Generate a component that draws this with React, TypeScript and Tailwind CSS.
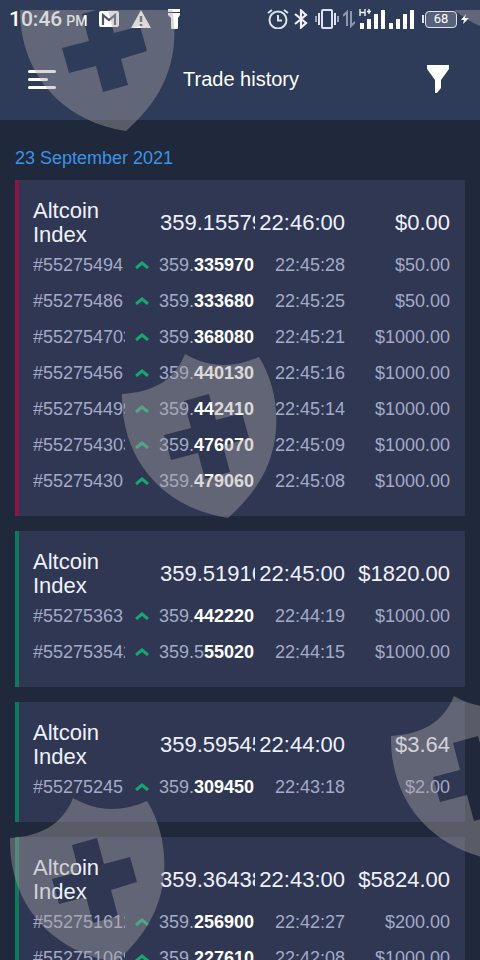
import { useState } from "react";

type Trade = {
  id: string;
  base: string;
  digits: string;
  time: string;
  amount: string;
};

type Group = {
  asset: string;
  price: string;
  time: string;
  total: string;
  won: boolean;
  trades: Trade[];
};

const groups: Group[] = [
  {
    asset: "Altcoin Index",
    price: "359.15579",
    time: "22:46:00",
    total: "$0.00",
    won: false,
    trades: [
      { id: "#55275494", base: "359.", digits: "335970", time: "22:45:28", amount: "$50.00" },
      { id: "#55275486", base: "359.", digits: "333680", time: "22:45:25", amount: "$50.00" },
      { id: "#552754703", base: "359.", digits: "368080", time: "22:45:21", amount: "$1000.00" },
      { id: "#55275456", base: "359.", digits: "440130", time: "22:45:16", amount: "$1000.00" },
      { id: "#552754499", base: "359.", digits: "442410", time: "22:45:14", amount: "$1000.00" },
      { id: "#552754303", base: "359.", digits: "476070", time: "22:45:09", amount: "$1000.00" },
      { id: "#55275430", base: "359.", digits: "479060", time: "22:45:08", amount: "$1000.00" },
    ],
  },
  {
    asset: "Altcoin Index",
    price: "359.51916",
    time: "22:45:00",
    total: "$1820.00",
    won: true,
    trades: [
      { id: "#55275363", base: "359.", digits: "442220", time: "22:44:19", amount: "$1000.00" },
      { id: "#552753542", base: "359.5", digits: "55020", time: "22:44:15", amount: "$1000.00" },
    ],
  },
  {
    asset: "Altcoin Index",
    price: "359.59545",
    time: "22:44:00",
    total: "$3.64",
    won: true,
    trades: [
      { id: "#55275245", base: "359.", digits: "309450", time: "22:43:18", amount: "$2.00" },
    ],
  },
  {
    asset: "Altcoin Index",
    price: "359.36438",
    time: "22:43:00",
    total: "$5824.00",
    won: true,
    trades: [
      { id: "#552751612", base: "359.", digits: "256900", time: "22:42:27", amount: "$200.00" },
      { id: "#552751069", base: "359.", digits: "227610", time: "22:42:08", amount: "$1000.00" },
    ],
  },
];

function Shield({ className }: { className: string }) {
  return (
    <svg
      viewBox="0 0 156 164"
      className={`absolute h-[164px] w-[156px] fill-[#aaa5a5]/42 ${className}`}
      aria-hidden="true"
    >
      <path
        fillRule="evenodd"
        d="M1 40C32 38 53 27 64 0C88 14 113 14 138 3C151 24 157 50 155 76C152 112 135 139 107 164C47 155 0 110 1 40ZM63 47L88 40L95 66L121 59L128 84L102 92L109 118L84 125L77 99L50 106L43 81L70 74Z"
      />
    </svg>
  );
}

function StatusBar() {
  return (
    <div className="flex h-[38px] items-center justify-between pr-[11px] pl-[9px] font-[Roboto,sans-serif] text-white">
      <div className="flex items-center">
        <span className="text-[21px] leading-6 font-medium">10:46</span>
        <span className="ml-1 pt-1 text-sm leading-5 font-medium">PM</span>
        <svg viewBox="0 0 20 16" className="ml-3 h-4 w-5" aria-hidden="true">
          <rect width="20" height="16" rx="2" fill="#fff" />
          <path d="M4 14V4L10 9L16 4V14" fill="none" stroke="#4d5366" strokeWidth="2.200" />
        </svg>
        <svg viewBox="0 0 20 18" className="ml-3 h-[18px] w-5" aria-hidden="true">
          <path d="M10 0L20 18H0Z" fill="#fff" />
          <path d="M10 6V12M10 14V16" stroke="#4d5366" strokeWidth="2.500" />
        </svg>
        <svg viewBox="0 0 14 20" className="ml-4 h-5 w-[14px]" fill="#fff" aria-hidden="true">
          <path d="M1 0H13V3H1ZM1 4H13V6L11 9V19Q11 20 10 20H5Q4 20 4 19V9L1 6Z" />
        </svg>
      </div>

      <div className="flex items-center">
        <svg viewBox="0 0 22 20" className="h-5 w-[22px]" fill="none" stroke="#dfe3ef" strokeWidth="2" aria-hidden="true">
          <circle cx="11" cy="11" r="8.500" />
          <path d="M11 6V11.500H15M1 4L5 1M21 4L17 1" />
        </svg>
        <svg viewBox="0 0 14 20" className="ml-[5px] h-5 w-[14px]" fill="none" stroke="#eef0f6" strokeWidth="2.200" aria-hidden="true">
          <path d="M1 5L12 14L7 18.500V1.500L12 6L1 15" />
        </svg>
        <svg viewBox="0 0 24 20" className="ml-[7px] h-5 w-6" fill="none" stroke="#dfe3ef" strokeWidth="2" aria-hidden="true">
          <rect x="7" y="1" width="10" height="18" rx="1" />
          <path d="M4 4V16M20 4V16" />
          <path d="M1 7V13M23 7V13" stroke="#9aa3ba" />
        </svg>
        <svg viewBox="0 0 12 18" className="ml-1 h-[18px] w-3" fill="none" stroke="#8d96ac" strokeWidth="2" aria-hidden="true">
          <path d="M0 6L4 2V16M8 1V16L12 12" />
        </svg>
        <svg viewBox="0 0 26 20" className="ml-1 h-5 w-[26px]" fill="#fff" aria-hidden="true">
          <path d="M1 14H5V20H1ZM8 10H12V20H8ZM15 5H19V20H15ZM22 1H26V20H22Z" />
          <path d="M1 0V7M6 0V7M1 3.500H6M8 2.500H12M10 0V5" stroke="#fff" strokeWidth="1.300" />
        </svg>
        <svg viewBox="0 0 26 20" className="ml-1 h-5 w-[26px]" fill="#fff" aria-hidden="true">
          <path d="M0 14H4V20H0ZM7 10H11V20H7ZM14 5H18V20H14ZM21 1H25V20H21Z" />
        </svg>
        <span className="ml-[7px] h-2 w-0.5 bg-[#dfe3ef]" />
        <span className="ml-px flex h-[17px] w-8 items-center justify-center rounded border border-[#dfe3ef] bg-white/20 text-[13px] leading-4">
          68
        </span>
        <svg viewBox="0 0 8 10" className="ml-1 h-[10px] w-2" fill="#fff" aria-hidden="true">
          <path d="M5 0L0 6H3L2 10L8 4H4Z" />
        </svg>
      </div>
    </div>
  );
}

function GroupCard({ group }: { group: Group }) {
  return (
    <table
      className={`block border-l-4 bg-[#303753] pt-[19px] pr-[15px] pb-[17px] pl-[14px] ${
        group.won ? "border-[#12775c]" : "border-[#8c1547]"
      }`}
    >
      <thead className="block">
        <tr className="flex h-12 items-center text-[22px] leading-6 text-[#eef1fd]">
          <th className="w-[92px] shrink-0 text-left font-normal">{group.asset}</th>
          <td className="ml-[35px] w-[95px] shrink-0 overflow-hidden whitespace-nowrap">{group.price}</td>
          <td className="w-[90px] shrink-0 text-right">{group.time}</td>
          <td className="flex-1 text-right">{group.total}</td>
        </tr>
      </thead>
      <tbody className="block">
        {group.trades.map((trade) => (
          <tr key={trade.id} className="flex h-9 items-center text-lg leading-6 text-[#a3aac8]">
            <td className="w-[92px] shrink-0 overflow-hidden">{trade.id}</td>
            <td className="w-[34px] shrink-0 pl-[10px]">
              <svg viewBox="0 0 14 8" className="h-2 w-[14px]" fill="none" stroke="#17a672" strokeWidth="3" aria-label="Up">
                <path d="M1 7L7 2L13 7" />
              </svg>
            </td>
            <td className="w-[97px] shrink-0 whitespace-nowrap">
              {trade.base}
              <b className="text-white">{trade.digits}</b>
            </td>
            <td className="w-[89px] shrink-0 text-right">{trade.time}</td>
            <td className="flex-1 text-right">{trade.amount}</td>
          </tr>
        ))}
      </tbody>
    </table>
  );
}

export default function App() {
  const [menuOpen, setMenuOpen] = useState(false);

  return (
    <div className="relative flex h-screen flex-col overflow-hidden bg-[#20283b] font-['Liberation_Sans',Arial,sans-serif]">
      <header className="shrink-0 bg-[#2e3b59]">
        <StatusBar />
        <div className="flex h-[82px] items-center justify-between pr-[30px] pl-7 text-white">
          <button
            type="button"
            aria-label="Menu"
            aria-expanded={menuOpen}
            onClick={() => setMenuOpen(!menuOpen)}
            className="flex w-7 flex-col gap-[5px]"
          >
            <span className="h-[3px] w-7 rounded-sm bg-white" />
            <span className="h-[3px] w-5 rounded-sm bg-white" />
            <span className="h-[3px] w-7 rounded-sm bg-white" />
          </button>
          <h1 className="text-xl leading-6">Trade history</h1>
          <button type="button" aria-label="Filter">
            <svg viewBox="0 0 24 28" className="h-7 w-6" fill="#fff" aria-hidden="true">
              <path d="M1 0H23V4L15 15V23L11 28H9V15L1 4Z" />
            </svg>
          </button>
        </div>
      </header>

      {/* Trades, newest first */}
      <main className="min-h-0 flex-1 overflow-y-auto px-[15px] pt-[26px] [scrollbar-width:none]">
        <h2 className="mb-[10px] text-lg leading-6 text-[#3a94e8]">23 September 2021</h2>
        <div className="flex flex-col gap-[15px]">
          {groups.map((group) => (
            <GroupCard key={group.time} group={group} />
          ))}
        </div>
      </main>

      {/* Watermarks */}
      <div className="pointer-events-none absolute inset-x-0 top-[10px] bottom-0 overflow-hidden">
        <Shield className="-top-[43px] left-[19px]" />
        <Shield className="-top-[137px] left-[410px]" />
        <Shield className="top-[344px] left-[121px]" />
        <Shield className="top-[686px] left-[390px]" />
        <Shield className="top-[788px] left-[9px]" />
      </div>
    </div>
  );
}
